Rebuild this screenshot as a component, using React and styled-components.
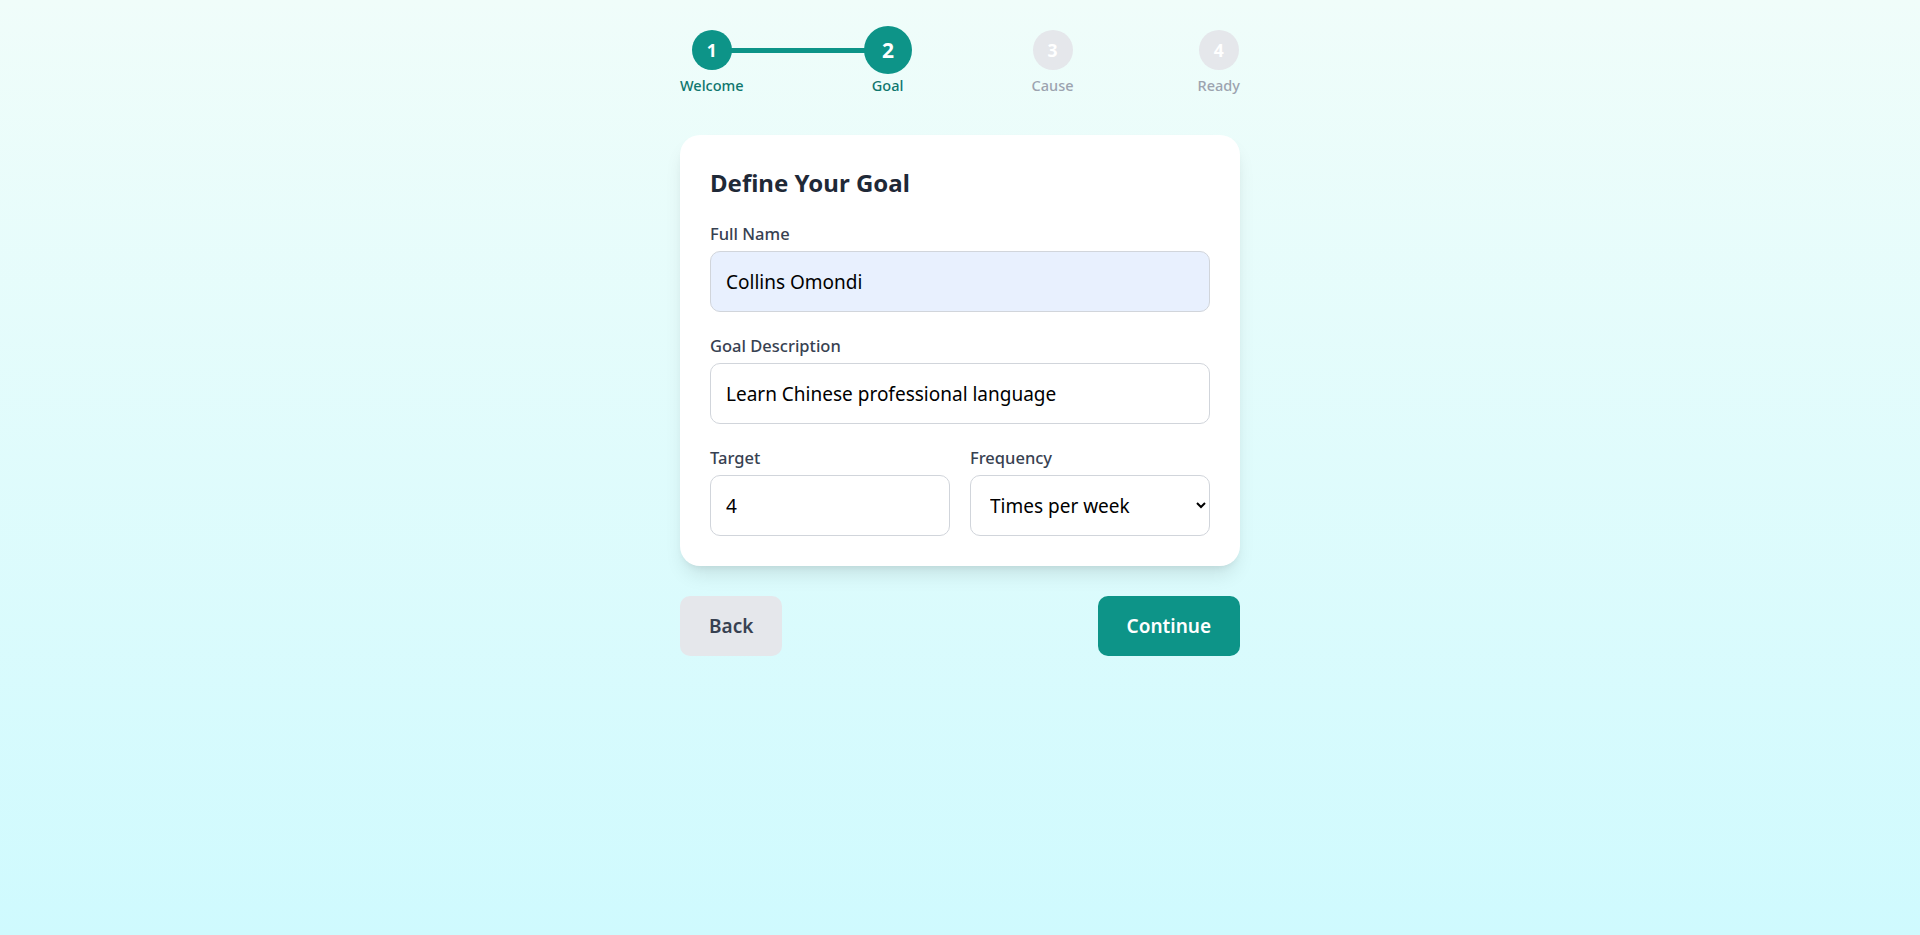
import React, { useState } from 'react'
import styled, { createGlobalStyle } from 'styled-components'

const GlobalStyle = createGlobalStyle`
  * { box-sizing: border-box; }
  body {
    margin: 0;
    font-family: "Noto Sans", "Open Sans", sans-serif;
  }
`

const Page = styled.div`
  min-height: 100vh;
  background: linear-gradient(to bottom, #f0fdfa, #cffafe);
  display: flex;
  justify-content: center;
  padding: 30px 0;
`

const Wrapper = styled.div`
  width: 560px;
`

const Stepper = styled.div`
  position: relative;
  display: flex;
  justify-content: space-between;
  margin-bottom: 40px;
`

const ProgressLine = styled.div`
  position: absolute;
  top: 18px;
  left: 32px;
  height: 5px;
  background: #0d9488;
`

const Step = styled.div`
  position: relative;
  z-index: 1;
  display: flex;
  flex-direction: column;
  align-items: center;
`

const StepCircle = styled.div`
  width: 40px;
  height: 40px;
  border-radius: 50%;
  display: flex;
  align-items: center;
  justify-content: center;
  font-size: 17.5px;
  font-weight: 700;
  color: #fff;
  background: ${p => (p.$done ? '#0d9488' : '#e5e7eb')};
  transform: ${p => (p.$active ? 'scale(1.2)' : 'none')};
`

const StepLabel = styled.span`
  margin-top: 5px;
  font-size: 14.5px;
  line-height: 20px;
  font-weight: 500;
  color: ${p => (p.$done ? '#0f766e' : '#9ca3af')};
`

const Card = styled.div`
  background: #fff;
  border-radius: 20px;
  padding: 30px;
  box-shadow: 0 12px 19px -4px rgba(0, 0, 0, 0.1), 0 5px 8px -5px rgba(0, 0, 0, 0.1);
`

const Title = styled.h2`
  margin: 0 0 20px;
  font-size: 24px;
  line-height: 36px;
  font-weight: 700;
  color: #1f2937;
`

const Form = styled.div`
  display: flex;
  flex-direction: column;
  gap: 21px;
`

const Row = styled.div`
  display: grid;
  grid-template-columns: 1fr 1fr;
  gap: 20px;
`

const Field = styled.div`
  display: flex;
  flex-direction: column;
`

const Label = styled.label`
  font-size: 16.5px;
  line-height: 25px;
  font-weight: 500;
  color: #374151;
  margin-bottom: 5px;
`

const Input = styled.input`
  width: 100%;
  height: 61px;
  padding: 0 15px;
  border: 1px solid #d1d5db;
  border-radius: 10px;
  font-family: inherit;
  font-size: 19px;
  color: #000;
  background: ${p => (p.$filled ? '#e8f0fe' : '#fff')};
  outline: none;
`

const Select = styled.select`
  width: 100%;
  height: 61px;
  padding: 0 12px 0 15px;
  border: 1px solid #d1d5db;
  border-radius: 10px;
  font-family: inherit;
  font-size: 19px;
  color: #000;
  background: #fff;
  outline: none;
`

const Actions = styled.div`
  display: flex;
  justify-content: space-between;
  margin-top: 30px;
`

const Button = styled.button`
  height: 60px;
  padding: 0 29px;
  border: none;
  border-radius: 10px;
  font-family: inherit;
  font-size: 19px;
  font-weight: 600;
  cursor: pointer;
  background: ${p => (p.$primary ? '#0d9488' : '#e5e7eb')};
  color: ${p => (p.$primary ? '#fff' : '#374151')};
`

const steps = ['Welcome', 'Goal', 'Cause', 'Ready']

export default function App() {
  const [name, setName] = useState('Collins Omondi')
  const [goal, setGoal] = useState('Learn Chinese professional language')
  const [target, setTarget] = useState('4')
  const [freq, setFreq] = useState('week')
  const current = 1

  return (
    <Page>
      <GlobalStyle />
      <Wrapper>
        <Stepper>
          <ProgressLine style={{ width: 176 }} />
          {steps.map((s, i) => (
            <Step key={s}>
              <StepCircle $done={i <= current} $active={i === current}>{i + 1}</StepCircle>
              <StepLabel $done={i <= current}>{s}</StepLabel>
            </Step>
          ))}
        </Stepper>

        <Card>
          <Title>Define Your Goal</Title>
          <Form>
            <Field>
              <Label>Full Name</Label>
              <Input $filled value={name} onChange={e => setName(e.target.value)} />
            </Field>
            <Field>
              <Label>Goal Description</Label>
              <Input value={goal} onChange={e => setGoal(e.target.value)} />
            </Field>
            <Row>
              <Field>
                <Label>Target</Label>
                <Input type="number" value={target} onChange={e => setTarget(e.target.value)} />
              </Field>
              <Field>
                <Label>Frequency</Label>
                <Select value={freq} onChange={e => setFreq(e.target.value)}>
                  <option value="day">Times per day</option>
                  <option value="week">Times per week</option>
                  <option value="month">Times per month</option>
                </Select>
              </Field>
            </Row>
          </Form>
        </Card>

        <Actions>
          <Button>Back</Button>
          <Button $primary>Continue</Button>
        </Actions>
      </Wrapper>
    </Page>
  )
}
